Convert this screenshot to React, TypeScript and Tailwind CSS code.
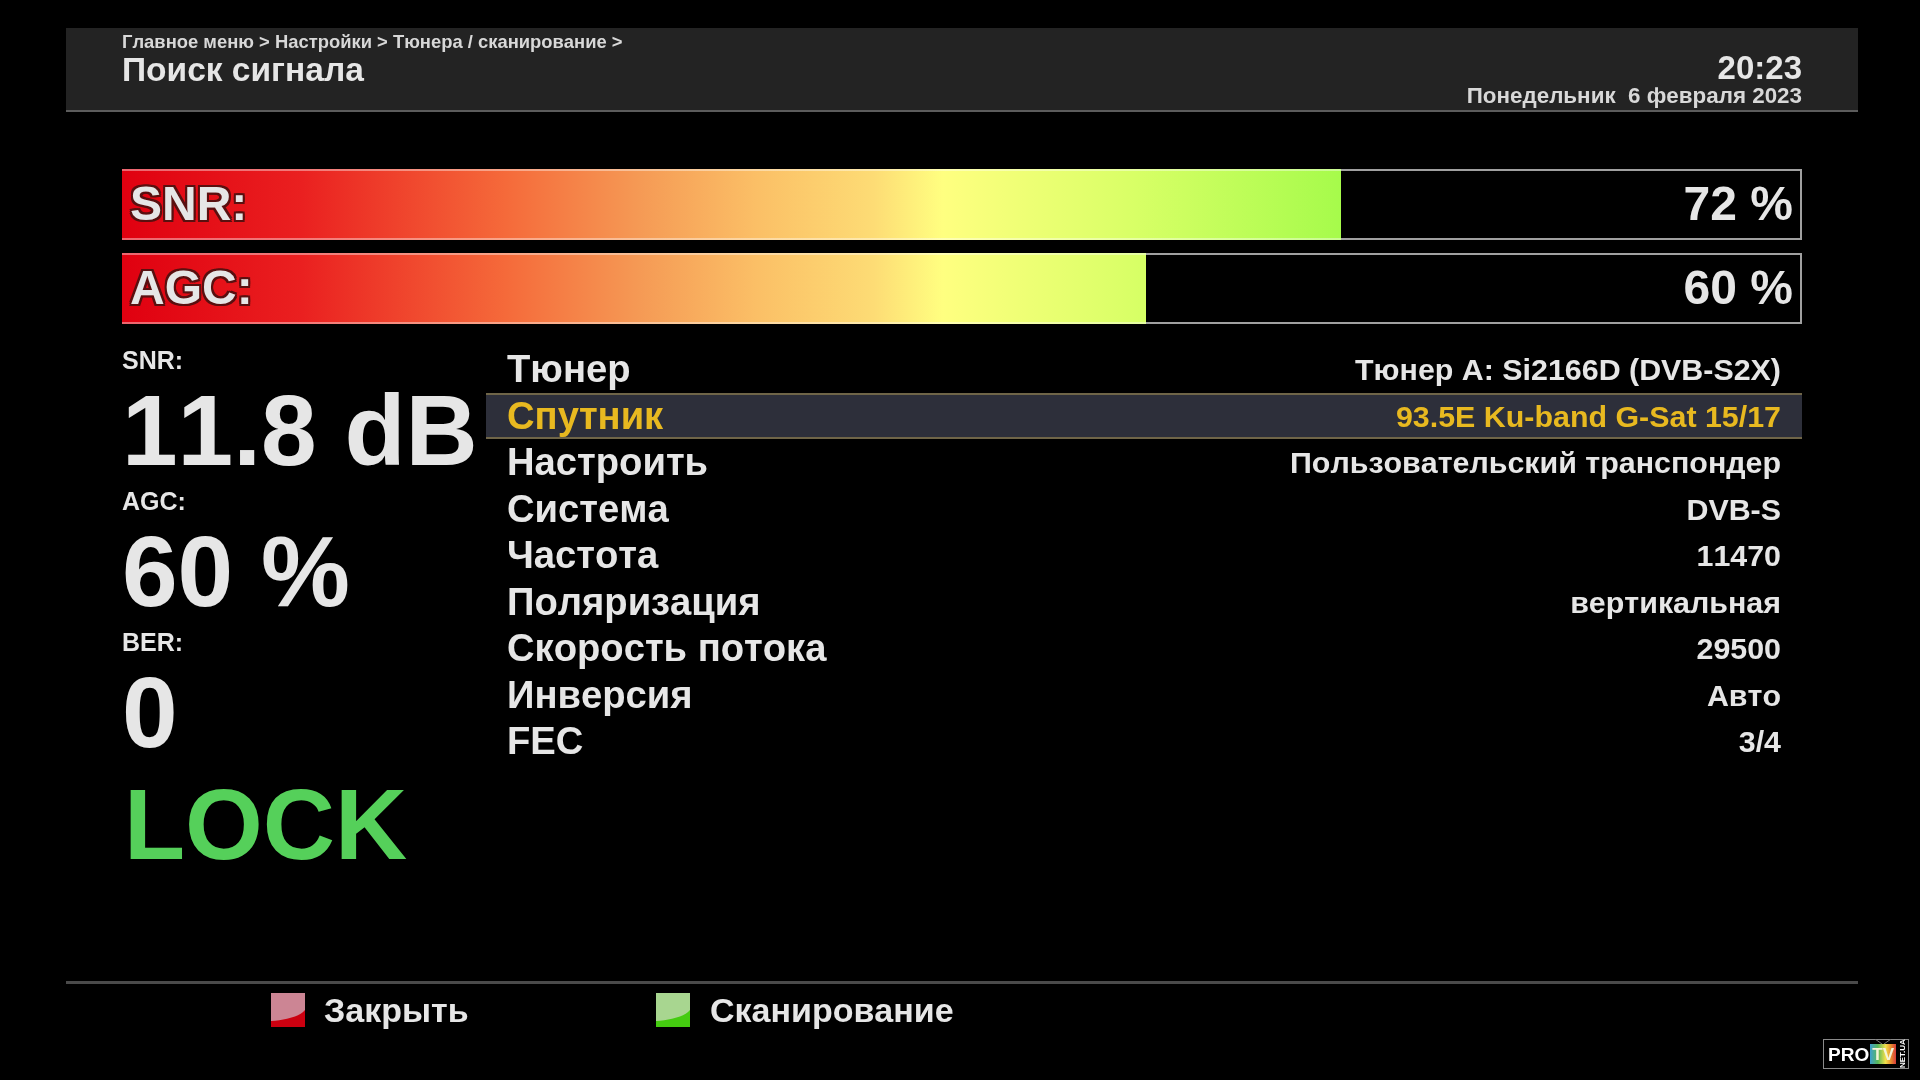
const rows = [
  { label: "Тюнер", value: "Тюнер A: Si2166D (DVB-S2X)" },
  { label: "Спутник", value: "93.5E Ku-band G-Sat 15/17", active: true },
  { label: "Настроить", value: "Пользовательский транспондер" },
  { label: "Система", value: "DVB-S" },
  { label: "Частота", value: "11470" },
  { label: "Поляризация", value: "вертикальная" },
  { label: "Скорость потока", value: "29500" },
  { label: "Инверсия", value: "Авто" },
  { label: "FEC", value: "3/4" },
];

const stats = [
  { label: "SNR:", value: "11.8 dB" },
  { label: "AGC:", value: "60 %" },
  { label: "BER:", value: "0" },
];

const bars = [
  { label: "SNR:", value: "72 %", fill: 1219 },
  { label: "AGC:", value: "60 %", fill: 1024 },
];

function Bar({ label, value, fill }: { label: string; value: string; fill: number }) {
  return (
    <div className="relative flex h-[71px] items-center justify-between border-2 border-[#a0a0a0] bg-black pl-[6px] pr-[7px]">
      <div
        className="absolute -inset-y-[2px] -left-[2px] border-y-2 border-white/40 bg-[linear-gradient(90deg,#e00010_0px,#ea2020_180px,#f56a3a_384px,#f59a55_518px,#fbbf66_634px,#fddc75_752px,#ffff80_821px,#d8ff66_1013px,#a6fb4b_1219px)]"
        style={{ width: fill }}
      />
      <span className="relative -mt-[2px] text-[48px] font-bold leading-none text-[#e6e6e6] [text-shadow:-2px_0_0_#5a1010,2px_0_0_#5a1010,0_-2px_0_#5a1010,0_2px_0_#5a1010,-2px_-2px_0_#5a1010,2px_2px_0_#5a1010,-2px_2px_0_#5a1010,2px_-2px_0_#5a1010]">
        {label}
      </span>
      <span className="relative -mt-[2px] text-[48px] font-bold leading-none text-[#e6e6e6]">{value}</span>
    </div>
  );
}

function ColorKey({ top, bottom }: { top: string; bottom: string }) {
  return (
    <svg width="34" height="34" viewBox="0 0 34 34" aria-hidden="true" className="shrink-0">
      <rect width="34" height="34" fill={bottom} />
      <path d="M0 0H34V17C28 24 14 27 0 28Z" fill={top} />
    </svg>
  );
}

function Logo() {
  return (
    <div className="absolute bottom-[11px] right-[11px] flex h-[30px] w-[86px] items-center border border-[#8a8a8a] bg-black pl-[4px]">
      <span className="text-[19px] font-black leading-none text-white">PRO</span>
      <span className="relative ml-[1px] flex h-[20px] w-[26px] items-center justify-center bg-[linear-gradient(90deg,#3f9fd0,#58b85a_30%,#f2e04a_60%,#e8902f_80%,#d83a3a)] text-[17px] font-bold leading-none text-[#f4f4d8]">
        <svg width="26" height="6" viewBox="0 0 26 6" aria-hidden="true" className="absolute -top-[5px] left-0">
          <path d="M5 0L12 5M21 0L14 5" stroke="#7a7a7a" strokeWidth="1" fill="none" />
        </svg>
        TV
      </span>
      <span className="absolute right-0 top-0 flex h-full w-[11px] rotate-180 items-center justify-center whitespace-nowrap bg-black text-[8px] font-bold leading-none text-white [writing-mode:vertical-rl]">
        NET.UA
      </span>
    </div>
  );
}

export default function App() {
  return (
    <div className="relative flex h-[1080px] w-[1920px] flex-col overflow-hidden bg-black pt-[28px] font-['Liberation_Sans',Arial,sans-serif] text-[#e6e6e6] blur-[0.4px] [font-kerning:none]">
      <header className="ml-[66px] flex h-[84px] w-[1792px] items-start justify-between border-b-2 border-[#5c5c5c] bg-[#232323] pl-[56px] pr-[56px] pt-[3px]">
        <div>
          <div className="text-[18.4px] font-bold leading-[22px] text-[#d8d8d8]">
            Главное меню &gt; Настройки &gt; Тюнера / сканирование &gt;
          </div>
          <div className="text-[33.5px] font-bold leading-[34px]">Поиск сигнала</div>
        </div>
        <div className="pt-[21px] text-right font-bold">
          <div className="text-[33px] leading-[32px]">20:23</div>
          <div className="whitespace-pre text-[22.4px] leading-[24px] text-[#d8d8d8]">Понедельник  6 февраля 2023</div>
        </div>
      </header>

      <section className="ml-[122px] mt-[57px] flex w-[1680px] flex-col gap-[13px]">
        {bars.map((bar) => (
          <Bar key={bar.label} {...bar} />
        ))}
      </section>

      <section className="ml-[122px] mt-[22px] flex w-[1680px]">
        <div className="w-[364px]">
          {stats.map((stat) => (
            <div key={stat.label} className="h-[141px]">
              <div className="text-[25px] font-bold leading-[28px]">{stat.label}</div>
              <div className="whitespace-nowrap text-[100px] font-bold leading-[113px]">{stat.value}</div>
            </div>
          ))}
          <div className="pl-[2px] pt-[5px] text-[100px] font-bold leading-[100px] text-[#55d05a]">LOCK</div>
        </div>
        <div className="flex-1">
          {rows.map((row) => (
            <div
              key={row.label}
              className={
                row.active
                  ? "flex h-[46.5px] items-center justify-between border-y-2 border-[#6f6548] bg-[#2d2f3a] px-[21px] text-[#e8b920]"
                  : "flex h-[46.5px] items-center justify-between px-[21px]"
              }
            >
              <span className="text-[38.2px] font-bold leading-none">{row.label}</span>
              <span className="text-[30.4px] font-bold leading-none">{row.value}</span>
            </div>
          ))}
        </div>
      </section>

      <footer className="mb-[40px] ml-[66px] mt-auto flex h-[59px] w-[1792px] items-center border-t-[3px] border-[#4a4a4a] pb-[4px] pl-[205px]">
        <div className="flex w-[385px] items-center gap-[19px]">
          <ColorKey top="#cc8594" bottom="#cc0010" />
          <span className="text-[34px] font-bold leading-none">Закрыть</span>
        </div>
        <div className="flex items-center gap-[20px]">
          <ColorKey top="#a8d690" bottom="#44cc10" />
          <span className="text-[34px] font-bold leading-none">Сканирование</span>
        </div>
      </footer>

      <Logo />
    </div>
  );
}
